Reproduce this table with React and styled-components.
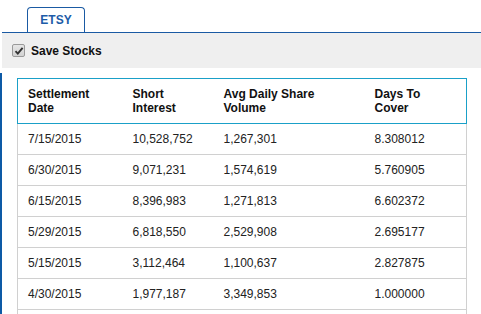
import styled, { createGlobalStyle } from 'styled-components'

const GlobalStyle = createGlobalStyle`
	html, body {
		margin: 0;
		padding: 0;
		background: #fff;
		font-family: "Liberation Sans", Arial, sans-serif;
	}
`

const rows = [
	['7/15/2015', '10,528,752', '1,267,301', '8.308012'],
	['6/30/2015', '9,071,231', '1,574,619', '5.760905'],
	['6/15/2015', '8,396,983', '1,271,813', '6.602372'],
	['5/29/2015', '6,818,550', '2,529,908', '2.695177'],
	['5/15/2015', '3,112,464', '1,100,637', '2.827875'],
	['4/30/2015', '1,977,187', '3,349,853', '1.000000'],
	['', '', '', ''],
]

function App() {
	return (
		<Page>
			<GlobalStyle />
			<TabStrip>
				<Tab>ETSY</Tab>
			</TabStrip>
			<OptionsBar>
				<CheckBox>
					<svg width="10" height="10" viewBox="0 0 10 10">
						<path d="M1.5 5.2 L3.8 7.6 L8.6 1.8" fill="none" stroke="#333" strokeWidth="1.9" />
					</svg>
				</CheckBox>
				<Label>Save Stocks</Label>
			</OptionsBar>
			<Content>
				<Table>
					<colgroup>
						<Col $w={105} />
						<Col $w={91} />
						<Col $w={151} />
						<Col />
					</colgroup>
					<thead>
						<tr>
							<Th>Settlement<br />Date</Th>
							<Th>Short<br />Interest</Th>
							<Th>Avg Daily Share<br />Volume</Th>
							<Th>Days To<br />Cover</Th>
						</tr>
					</thead>
					<tbody>
						{rows.map((r, i) => (
							<Tr key={i}>
								{r.map((c, j) => (
									<Td key={j}>{c}</Td>
								))}
							</Tr>
						))}
					</tbody>
				</Table>
			</Content>
		</Page>
	)
}

export default App

const Page = styled.div`
	width: 481px;
	height: 314px;
	overflow: hidden;
`

const TabStrip = styled.div`
	display: flex;
	margin-left: 2px;
	padding: 7px 0 0 25px;
	border-bottom: 1px solid #1a5aa3;
`

const Tab = styled.div`
	width: 56px;
	height: 24px;
	display: flex;
	align-items: center;
	justify-content: center;
	border: 1px solid #1a5aa3;
	border-bottom: none;
	border-radius: 4px 4px 0 0;
	color: #1d5ca8;
	font-size: 12px;
	font-weight: bold;
	background: #fff;
`

const OptionsBar = styled.div`
	display: flex;
	align-items: center;
	margin-left: 2px;
	height: 35px;
	padding-left: 10px;
	background: #efefef;
`

const CheckBox = styled.span`
	display: flex;
	align-items: center;
	justify-content: center;
	width: 11px;
	height: 11px;
	border: 1px solid #9a9a9a;
	border-radius: 2px;
	background: linear-gradient(#e6e6e6, #d2d2d2);
	margin-right: 6px;
`

const Label = styled.span`
	font-size: 12px;
	font-weight: bold;
	color: #111;
`

const Content = styled.div`
	margin-top: 5px;
	padding: 5px 0 0 15px;
	border-left: 2px solid #0d5aa6;
`

const Table = styled.table`
	width: 450px;
	border-collapse: collapse;
	table-layout: fixed;
	font-size: 12px;
`

const Col = styled.col`
	width: ${(p) => (p.$w ? `${p.$w}px` : 'auto')};
`

const Th = styled.th`
	text-align: left;
	font-weight: bold;
	color: #111;
	line-height: 14px;
	padding: 8px 10px;
	border-top: 1px solid #1aa0c8;
	border-bottom: 1px solid #1aa0c8;
	&:first-child {
		border-left: 1px solid #1aa0c8;
	}
	&:last-child {
		border-right: 1px solid #1aa0c8;
	}
`

const Tr = styled.tr`
	border-bottom: 1px solid #d0d0d0;
`

const Td = styled.td`
	color: #222;
	line-height: 14px;
	height: 14px;
	padding: 8px 10px;
	white-space: nowrap;
	&:first-child {
		border-left: 1px solid #d0d0d0;
	}
	&:last-child {
		border-right: 1px solid #d0d0d0;
	}
`
